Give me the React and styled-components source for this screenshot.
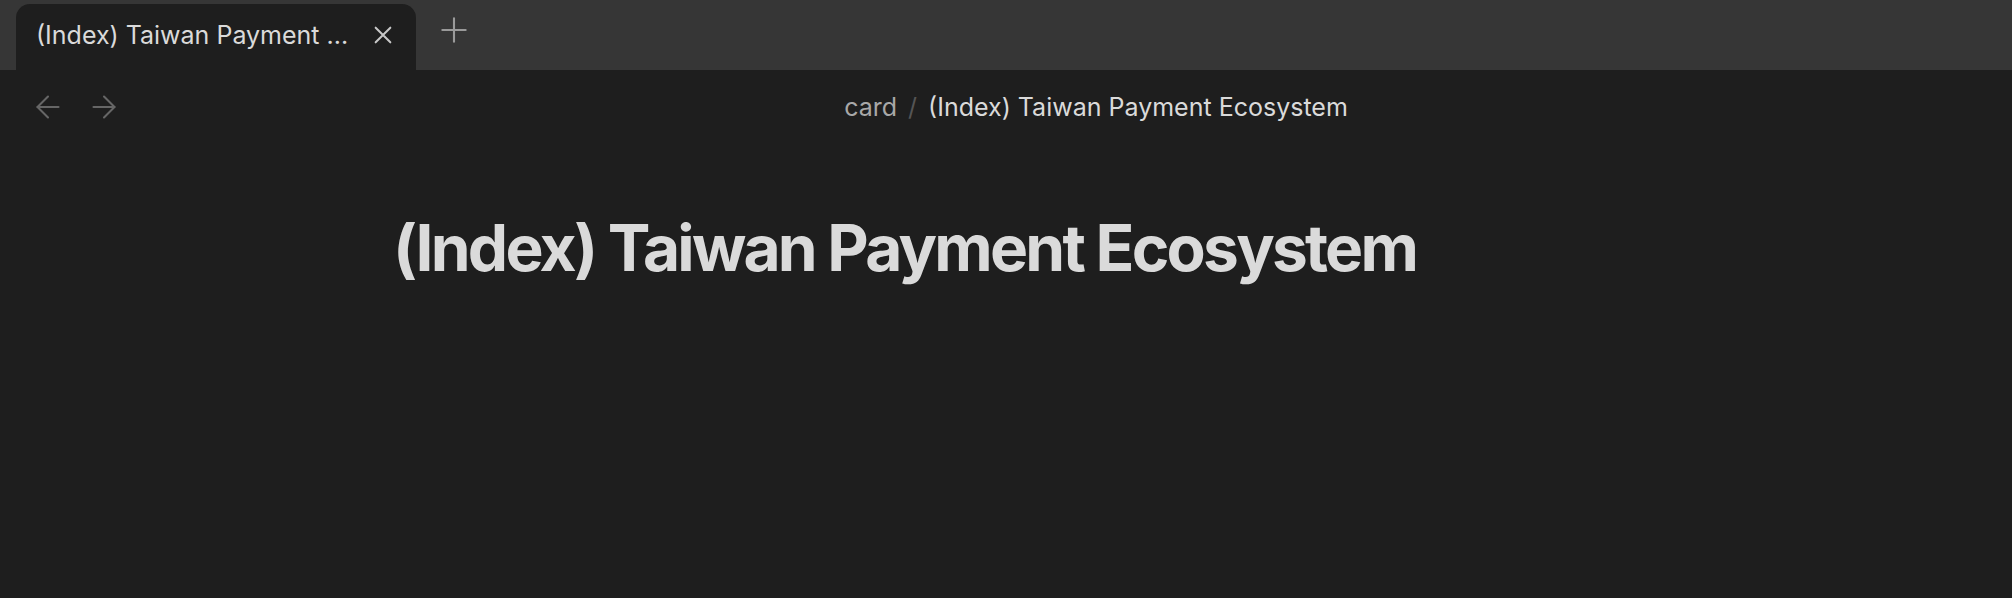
import styled, { createGlobalStyle } from "styled-components";

const GlobalStyle = createGlobalStyle`
  html, body {
    margin: 0;
    padding: 0;
    background: #1e1e1e;
  }
  body {
    font-family: Inter, "Noto Sans", sans-serif;
    -webkit-font-smoothing: antialiased;
  }
`;

const Window = styled.div`
  width: 100vw;
  height: 100vh;
  display: flex;
  flex-direction: column;
  background: #1e1e1e;
  overflow: hidden;
`;

const TabBar = styled.div`
  height: 70px;
  background: #363636;
  display: flex;
  align-items: flex-end;
  padding-left: 16px;
  gap: 24px;
`;

const Tab = styled.div`
  width: 400px;
  height: 66px;
  box-sizing: border-box;
  background: #1e1e1e;
  border-radius: 14px 14px 0 0;
  display: flex;
  align-items: center;
  padding: 0 22px 4px 20px;
  color: #dadada;
  font-size: 25px;
`;

const TabTitle = styled.span`
  flex: 1;
  white-space: nowrap;
  overflow: hidden;
`;

const IconButton = styled.button`
  background: none;
  border: none;
  padding: 0;
  display: flex;
  align-items: center;
  justify-content: center;
  color: ${(p) => p.color || "#b3b3b3"};
  cursor: pointer;
`;

const NewTab = styled(IconButton)`
  height: 70px;
  padding-bottom: 10px;
  box-sizing: border-box;
`;

const Header = styled.div`
  height: 74px;
  display: flex;
  align-items: center;
  padding-left: 30px;
`;

const Nav = styled.div`
  display: flex;
  gap: 20px;
  width: 100px;
`;

const Breadcrumb = styled.div`
  flex: 1;
  display: flex;
  justify-content: center;
  align-items: center;
  gap: 11px;
  font-size: 25px;
  padding-left: 50px;
`;

const Crumb = styled.span`
  color: ${(p) => (p.$current ? "#dadada" : "#a8a8a8")};
`;

const Sep = styled.span`
  color: #555;
`;

const Content = styled.div`
  width: 1226px;
  margin: 0 auto;
  padding-top: 66px;
`;

const Title = styled.h1`
  margin: 0;
  font-size: 64px;
  font-weight: 700;
  letter-spacing: -0.043em;
  color: #dadada;
  line-height: 1.2;
`;

const Arrow = ({ dir }) => (
  <svg width="36" height="36" viewBox="0 0 24 24" fill="none" stroke="currentColor" strokeWidth="1.4" strokeLinecap="round" strokeLinejoin="round">
    {dir === "left" ? (
      <>
        <path d="M19 12H5" />
        <path d="M12 19l-7-7 7-7" />
      </>
    ) : (
      <>
        <path d="M5 12h14" />
        <path d="M12 5l7 7-7 7" />
      </>
    )}
  </svg>
);

export default function App() {
  return (
    <Window>
      <GlobalStyle />
      <TabBar>
        <Tab>
          <TabTitle>(Index) Taiwan Payment ...</TabTitle>
          <IconButton color="#c8c8c8">
            <svg width="22" height="22" viewBox="0 0 24 24" fill="none" stroke="currentColor" strokeWidth="2.2" strokeLinecap="round">
              <path d="M4 4l16 16M20 4L4 20" />
            </svg>
          </IconButton>
        </Tab>
        <NewTab color="#9a9a9a">
          <svg width="28" height="28" viewBox="0 0 24 24" fill="none" stroke="currentColor" strokeWidth="1.8" strokeLinecap="round">
            <path d="M12 2v20M2 12h20" />
          </svg>
        </NewTab>
      </TabBar>
      <Header>
        <Nav>
          <IconButton color="#666">
            <Arrow dir="left" />
          </IconButton>
          <IconButton color="#666">
            <Arrow dir="right" />
          </IconButton>
        </Nav>
        <Breadcrumb>
          <Crumb>card</Crumb>
          <Sep>/</Sep>
          <Crumb $current>(Index) Taiwan Payment Ecosystem</Crumb>
        </Breadcrumb>
      </Header>
      <Content>
        <Title>(Index) Taiwan Payment Ecosystem</Title>
      </Content>
    </Window>
  );
}
